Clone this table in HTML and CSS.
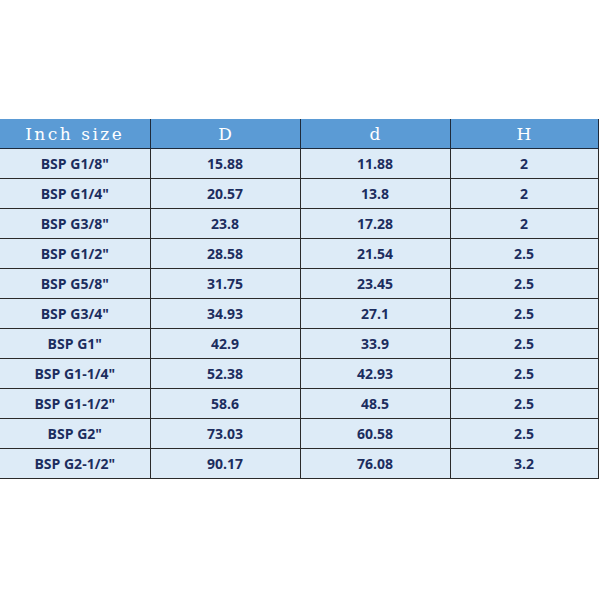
FILE: index.html
```html
<!DOCTYPE html>
<html>
<head>
<meta charset="utf-8">
<link rel="stylesheet" href="styles.css">
</head>
<body>
<div class="page">
<table class="sizes">
<colgroup>
<col class="c1"><col class="c2"><col class="c3"><col class="c4">
</colgroup>
<thead>
<tr><th class="wide">Inch size</th><th>D</th><th>d</th><th>H</th></tr>
</thead>
<tbody>
<tr><td>BSP G1/8"</td><td>15.88</td><td>11.88</td><td>2</td></tr>
<tr><td>BSP G1/4"</td><td>20.57</td><td>13.8</td><td>2</td></tr>
<tr><td>BSP G3/8"</td><td>23.8</td><td>17.28</td><td>2</td></tr>
<tr><td>BSP G1/2"</td><td>28.58</td><td>21.54</td><td>2.5</td></tr>
<tr><td>BSP G5/8"</td><td>31.75</td><td>23.45</td><td>2.5</td></tr>
<tr><td>BSP G3/4"</td><td>34.93</td><td>27.1</td><td>2.5</td></tr>
<tr><td>BSP G1"</td><td>42.9</td><td>33.9</td><td>2.5</td></tr>
<tr><td>BSP G1-1/4"</td><td>52.38</td><td>42.93</td><td>2.5</td></tr>
<tr><td>BSP G1-1/2"</td><td>58.6</td><td>48.5</td><td>2.5</td></tr>
<tr><td>BSP G2"</td><td>73.03</td><td>60.58</td><td>2.5</td></tr>
<tr><td>BSP G2-1/2"</td><td>90.17</td><td>76.08</td><td>3.2</td></tr>
</tbody>
</table>
</div>
</body>
</html>
```
FILE: styles.css
```css
html, body {
  margin: 0;
  padding: 0;
  background: #ffffff;
}
.page {
  width: 600px;
  height: 600px;
  padding-top: 119px;
  box-sizing: border-box;
}
.sizes {
  width: 598px;
  border-collapse: collapse;
  table-layout: fixed;
}
.sizes .c1, .sizes .c2, .sizes .c3 {
  width: 150px;
}
.sizes .c4 {
  width: 148px;
}
.sizes th {
  background: #5b9bd5;
  color: #ffffff;
  font-family: "DejaVu Serif", "Liberation Serif", serif;
  font-weight: normal;
  font-size: 17px;
  height: 29px;
  padding: 0;
  text-align: center;
  border-right: 1px solid #1e2a3a;
  border-bottom: 1px solid #1e2a3a;
}
.sizes th.wide {
  letter-spacing: 2.5px;
  font-size: 17px;
}
.sizes td {
  background: #ddebf7;
  color: #1c2d5e;
  font-family: "Open Sans", "Liberation Sans", sans-serif;
  font-weight: bold;
  font-size: 14px;
  height: 29px;
  padding: 0;
  text-align: center;
  border-right: 1px solid #2a2a2a;
  border-bottom: 1px solid #2a2a2a;
}
```
